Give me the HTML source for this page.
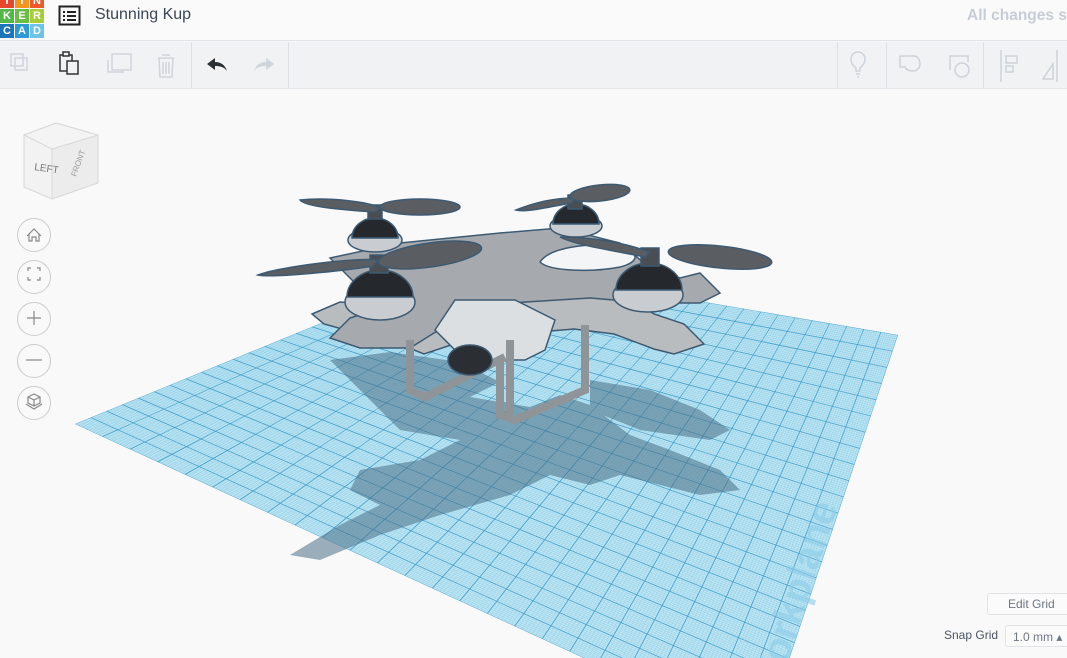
<!DOCTYPE html>
<html><head><meta charset="utf-8"><style>
*{margin:0;padding:0;box-sizing:border-box}
body{width:1067px;height:658px;overflow:hidden;background:#f9f9f9;font-family:"Liberation Sans",sans-serif;position:relative}
#hdr{position:absolute;left:0;top:0;width:1067px;height:41px;background:#fafafa;border-bottom:1px solid #dfe2e6}
#tb{position:absolute;left:0;top:42px;width:1067px;height:47px;background:#f1f2f4;border-bottom:1px solid #e3e5e8}
.lg{position:absolute;width:14px;height:14px;color:#fff;font-weight:bold;font-size:11px;text-align:center;line-height:14px}
.sep{position:absolute;top:42px;width:1px;height:47px;background:#dde0e4}
.btn{position:absolute;left:17px;width:34px;height:34px;border:1px solid #c9cbce;border-radius:50%;background:#f9f9f9}
</style></head><body>
<div id="hdr">
 <div class="lg" style="left:0;top:-6px;background:#e8452c">T</div>
 <div class="lg" style="left:15px;top:-6px;background:#f7941d">I</div>
 <div class="lg" style="left:30px;top:-6px;background:#f05a28">N</div>
 <div class="lg" style="left:0;top:9px;background:#54b848">K</div>
 <div class="lg" style="left:15px;top:9px;background:#6abd45">E</div>
 <div class="lg" style="left:30px;top:9px;background:#a6ce39">R</div>
 <div class="lg" style="left:0;top:24px;background:#1b75bb">C</div>
 <div class="lg" style="left:15px;top:24px;background:#2b9ad6">A</div>
 <div class="lg" style="left:30px;top:24px;background:#6cc3e8">D</div>
 <svg style="position:absolute;left:58px;top:5px" width="24" height="22"><rect x="1.5" y="1.5" width="20" height="18" fill="none" stroke="#222" stroke-width="2"/><g fill="#222"><rect x="5" y="6" width="2" height="2"/><rect x="9" y="6" width="9" height="2"/><rect x="5" y="10" width="2" height="2"/><rect x="9" y="10" width="9" height="2"/><rect x="5" y="14" width="2" height="2"/><rect x="9" y="14" width="9" height="2"/></g></svg>
 <div style="position:absolute;left:95px;top:6px;font-size:16px;color:#3b4656">Stunning Kup</div>
 <div style="position:absolute;left:967px;top:7px;font-size:15.5px;font-weight:bold;color:#c7ccd5;white-space:nowrap">All changes saved</div>
</div>
<div id="tb"></div>
<div class="sep" style="left:191px"></div><div class="sep" style="left:288px"></div>
<div class="sep" style="left:837px"></div><div class="sep" style="left:886px"></div><div class="sep" style="left:983px"></div>
<svg style="position:absolute;left:0;top:42px" width="1067" height="47" fill="none" stroke-width="1.5">
 <g stroke="#cfd5dc"><rect x="11" y="12" width="12" height="12"/><rect x="15" y="16" width="12" height="12"/></g>
 <g stroke="#333"><rect x="60" y="13" width="12" height="16"/><rect x="67" y="19" width="11" height="13" fill="#f1f2f4"/><rect x="63" y="10" width="6" height="4" fill="#f1f2f4"/></g>
 <g stroke="#cfd5dc"><rect x="112" y="12" width="19" height="16"/><path d="M108 18v12h16"/><path d="M162 13h8M158 16h16M159 16l1 19h12l1-19M163 20v12M166 20v12M169 20v12"/></g>
 <path d="M207 22l8-6v4c6 0 10 3 12 9c-3-4-7-5-12-5v4z" fill="#2a2f33"/>
 <path d="M274 22l-8-6v4c-6 0-10 3-12 9c3-4 7-5 12-5v4z" fill="#cfd5dc"/>
 <g stroke="#cdd3da"><path d="M856 26c-4-3-5-6-5-9a7 7 0 0 1 14 0c0 3-1 6-5 9v3h-4zM856 32h4M857 35h2"/><path d="M900 14h14c3 0 6 3 6 8a7 7 0 0 1-7 7c-5 0-7-2-8-4l-5 0z"/><path d="M950 28v-14h18v6"/><circle cx="962" cy="28" r="7"/><path d="M1001 8v32M1006 14h11v7h-11zM1006 24h7v6h-7z"/><path d="M1053 37l-10 0l10-15zM1057 8v32"/></g>
</svg>
<svg id="wp" style="position:absolute;left:0;top:0" width="1067" height="658">
 <defs><clipPath id="cp"><polygon points="75,424 470,262 898,335 762,740"/></clipPath></defs>
 <polygon points="75,424 470,262 898,335 762,740" fill="#bfe5f3"/>
 <g id="gl" clip-path="url(#cp)"></g>
 <text x="0" y="0" transform="translate(775,700) rotate(-72)" font-size="40" font-weight="bold" fill="#8ccde8" opacity="0.6">Workplane</text>
 <g fill="#4a6f86" opacity="0.55">
  <path d="M330 360l60 -8 70 10 40 20-30 15 60 10 30-12 30 10 40 30 40 15 50 20 20 20-40 5-80-20-30 10-40-10-40 20-70 20-60 20-60 25-30-5 50-30 40-20 -30-15 10-20 60-10 40-20-60-10z"/>
  <path d="M590 380l60 10 50 20 30 20 -20 10-70-10-50-20z"/>
 </g>
 <g stroke="#3d5a73" stroke-width="1.5">
  <path d="M400 307l-60-5-28 12 12 10 80 22 20 8 30-10 60-10 60 -5 40 5 40 15 20 5 30-10-20-20-30-10-40-25-40-20-50 5-40 3-50 10z" fill="#b9bcbf"/>
  <path d="M330 258l70-15 100-10 60-5 60 15 30 25 30 10 20-5 20 20-20 10-50 0-60-5-80 5-60 20-40 25-50 0-30-10 20-20 30-10z" fill="#a6a9ad"/>
  <path d="M540 262c10-15 50-20 80-15 20 5 20 15 0 20-25 5-70 5-80-5z" fill="#f4f5f6"/>
  <path d="M455 300h60l40 20-10 30-20 10h-60l-30-30z" fill="#dcdfe2"/>
  <path d="M410 340v50l15 7 80-40M500 360v55l15 5 70-30v-65M510 340v78" fill="none" stroke="#8f9498" stroke-width="8"/>
  <ellipse cx="470" cy="360" rx="22" ry="15" fill="#2b2f33"/>
  <g fill="#c9ccd0"><ellipse cx="380" cy="302" rx="35" ry="18"/><ellipse cx="648" cy="295" rx="35" ry="17"/><ellipse cx="375" cy="240" rx="27" ry="12"/><ellipse cx="576" cy="226" rx="26" ry="11"/></g>
  <g fill="#25292d"><path d="M347 297a33 27 0 0 1 66 0z"/><path d="M616 290a33 27 0 0 1 66 0z"/><path d="M352 238a23 20 0 0 1 46 0z"/><path d="M553 224a23 20 0 0 1 46 0z"/></g>
  <g fill="#4a4e52"><rect x="370" y="255" width="18" height="18"/><rect x="641" y="248" width="18" height="18"/><rect x="368" y="205" width="14" height="14"/><rect x="568" y="195" width="14" height="14"/></g>
  <g fill="#5a5e62">
   <path d="M258 275c20-8 100-18 120-15l-5 6c-30 5-100 12-115 9z"/><ellipse cx="430" cy="255" rx="52" ry="12" transform="rotate(-8 430 255)"/>
   <path d="M300 200c30-3 70 2 80 8l-5 4c-30-2-70-5-75-12z"/><ellipse cx="420" cy="207" rx="40" ry="8"/>
   <path d="M516 210c20-8 40-12 58-12l-2 5c-20 3-45 10-56 7z"/><ellipse cx="600" cy="193" rx="30" ry="8" transform="rotate(-6 600 193)"/>
   <path d="M560 237c40 0 70 8 90 15l-5 5c-30-6-70-12-85-20z"/><ellipse cx="720" cy="257" rx="52" ry="11" transform="rotate(6 720 257)"/>
  </g>
 </g>
</svg>
<svg style="position:absolute;left:22px;top:115px" width="80" height="85">
 <path d="M2 20l32-12 42 12-8 12-38 14z" fill="#f4f4f4" stroke="#d5d5d5"/>
 <path d="M2 20l28 14v50l-28-12z" fill="#f2f2f2" stroke="#d8d8d8"/>
 <path d="M30 34l46-14v48l-46 16z" fill="#ececec" stroke="#d8d8d8"/>
 <text x="12" y="55" font-size="10" fill="#777" transform="rotate(8 12 55)">LEFT</text>
 <text x="54" y="62" font-size="8" fill="#999" transform="rotate(-70 54 62)">FRONT</text>
</svg>
<div class="btn" style="top:218px"></div><div class="btn" style="top:260px"></div><div class="btn" style="top:302px"></div><div class="btn" style="top:344px"></div><div class="btn" style="top:386px"></div>
<svg style="position:absolute;left:17px;top:218px" width="34" height="202" fill="none" stroke="#888" stroke-width="1.2">
 <path d="M10 18l7-7 7 7M12 16v7h3v-4h4v4h3v-7"/>
 <path d="M11 53v-3h3M20 50h3v3M23 59v3h-3M14 62h-3v-3"/>
 <path d="M17 93v14M10 100h14"/>
 <path d="M9 142h16"/>
 <path d="M17 176l6 3v6l-6 3-6-3v-6zM11 179l6 3 6-3M17 182v6M9 186l8 5 8-5"/>
</svg>
<div style="position:absolute;left:987px;top:593px;width:90px;height:22px;border:1px solid #e1e3e6;border-radius:3px;background:#fbfbfb;color:#6e7884;font-size:12px;padding:3px 0 0 20px">Edit Grid</div>
<div style="position:absolute;left:944px;top:628px;font-size:12px;color:#4a5563">Snap Grid</div>
<div style="position:absolute;left:1005px;top:625px;width:70px;height:22px;border:1px solid #e1e3e6;border-radius:3px;background:#fbfbfb;color:#6e7884;font-size:12px;padding:4px 0 0 7px">1.0 mm ▴</div>
<script>
var A=[75,424],B=[470,262],C=[898,335],D=[762,740];
function L(p,q,t){return [p[0]+(q[0]-p[0])*t,p[1]+(q[1]-p[1])*t]}
var s='';var N=200;
for(var i=0;i<=N;i++){var t=i/N;var maj=i%8==0;
var c=maj?'#4aa3cc':'#8fcfe8',w=maj?0.9:0.45;
var p=L(A,B,t),q=L(D,C,t);s+='<line x1="'+p[0]+'" y1="'+p[1]+'" x2="'+q[0]+'" y2="'+q[1]+'" stroke="'+c+'" stroke-width="'+w+'"/>';
p=L(A,D,t);q=L(B,C,t);s+='<line x1="'+p[0]+'" y1="'+p[1]+'" x2="'+q[0]+'" y2="'+q[1]+'" stroke="'+c+'" stroke-width="'+w+'"/>';}
document.getElementById('gl').innerHTML=s;
</script>
</body></html>
